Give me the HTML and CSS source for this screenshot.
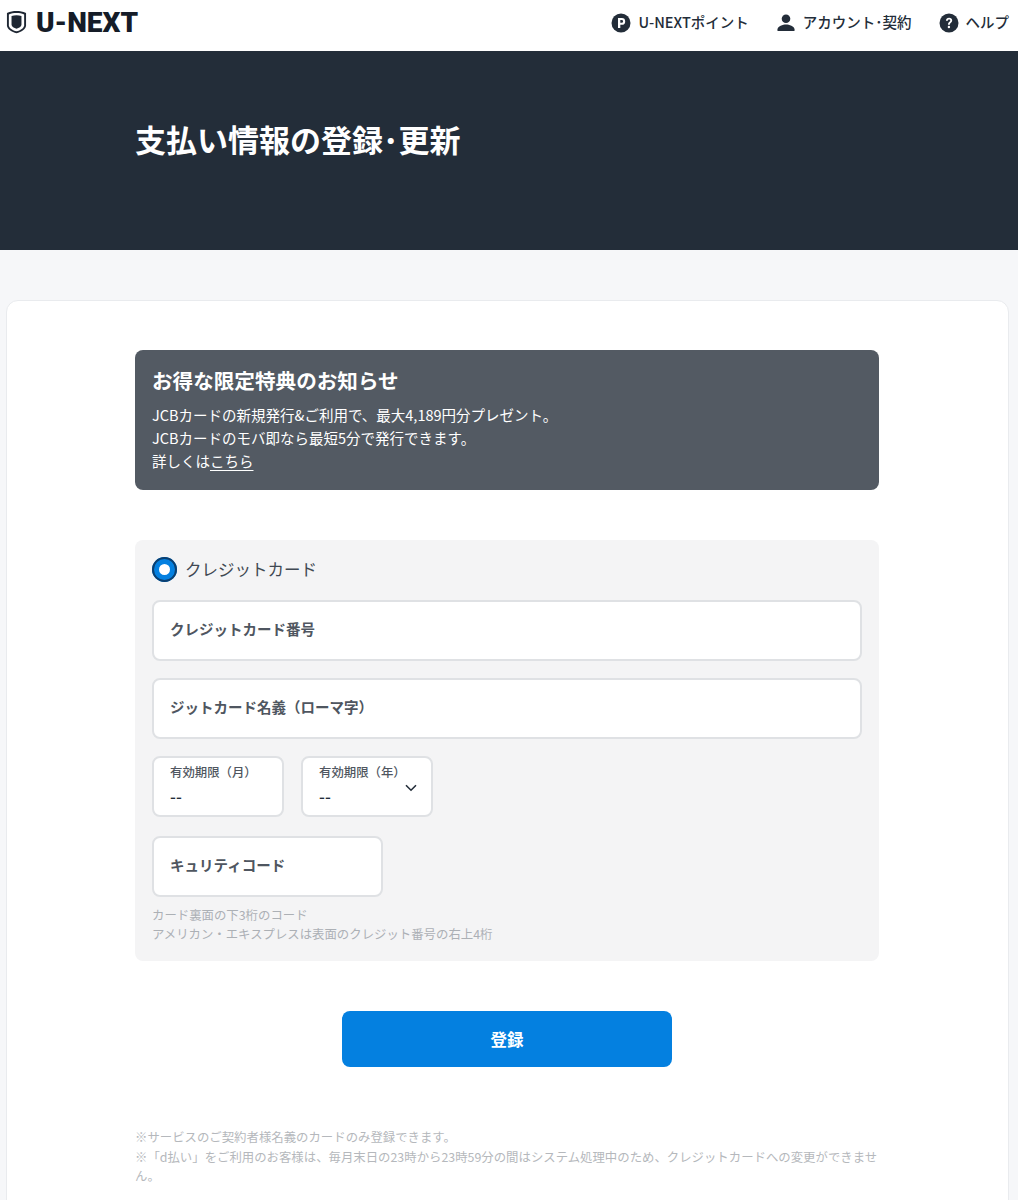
FILE: index.html
```html
<!DOCTYPE html>
<html lang="ja">
<head>
<meta charset="utf-8">
<title>支払い情報の登録・更新</title>
<link rel="stylesheet" href="styles.css">
</head>
<body>
<header class="topbar">
  <a class="logo">
    <svg class="logo-mark" viewBox="0 0 22 25" width="21" height="24"><path d="M1 3.200C4.500 1.500 7.500 1 11 1s6.500.5 10 2.200V16c0 4.500-5 7-10 8.300C6 23 1 20.500 1 16z" fill="#1f2733"/><path d="M3 4.600C5.500 3.500 8 3.100 11 3.100s5.500.4 8 1.500v11.200c0 3.200-4 5.300-8 6.400-4-1.100-8-3.200-8-6.400z" fill="#fff"/><path d="M5.800 6.200c1.700-.5 3.400-.7 5.200-.7s3.500.2 5.200.7v9.300c0 2-2.700 3.400-5.200 4.100-2.500-.7-5.200-2.100-5.200-4.100z" fill="#1f2733"/></svg>
    <span class="logo-text">U-NEXT</span>
  </a>
  <nav class="topnav">
    <a class="navitem">
      <svg viewBox="0 0 20 20" width="20" height="20"><circle cx="10" cy="10" r="9.500" fill="#232d39"/><path d="M7 5h3.800a3.400 3.400 0 0 1 0 6.800H9.300V15H7zM9.300 7v2.800h1.400a1.400 1.400 0 0 0 0-2.800z" fill="#fff" fill-rule="evenodd"/></svg>
      <span>U-NEXTポイント</span>
    </a>
    <a class="navitem">
      <svg viewBox="0 0 20 20" width="20" height="20"><circle cx="10" cy="5.700" r="4.300" fill="#232d39"/><path d="M1.500 18v-1.800c0-3 5.500-4.700 8.500-4.700s8.500 1.700 8.500 4.700V18z" fill="#232d39"/></svg>
      <span>アカウント･契約</span>
    </a>
    <a class="navitem">
      <svg viewBox="0 0 20 20" width="20" height="20"><circle cx="10" cy="10" r="9.500" fill="#232d39"/><path d="M6.900 7.700C7 5.900 8.300 4.800 10.100 4.800c1.800 0 3.100 1.100 3.100 2.700 0 2.300-2.400 2.300-2.400 4.300H9c0-2.900 2.300-2.900 2.300-4.300 0-.6-.5-1.100-1.200-1.100-.7 0-1.200.5-1.300 1.300z" fill="#fff"/><circle cx="9.900" cy="14" r="1.200" fill="#fff"/></svg>
      <span>ヘルプ</span>
    </a>
  </nav>
</header>

<section class="hero">
  <h1>支払い情報の登録･更新</h1>
</section>

<main class="page">
  <div class="card">
    <div class="notice">
      <h2>お得な限定特典のお知らせ</h2>
      <p>JCBカードの新規発行&amp;ご利用で、最大4,189円分プレゼント。</p>
      <p>JCBカードのモバ即なら最短5分で発行できます。</p>
      <p>詳しくは<a class="notice-link">こちら</a></p>
    </div>

    <form class="panel">
      <div class="radio-row">
        <span class="radio"></span>
        <span class="radio-label">クレジットカード</span>
      </div>
      <div class="field"><span class="placeholder">クレジットカード番号</span></div>
      <div class="field"><span class="placeholder">ジットカード名義（ローマ字）</span></div>
      <div class="expiry">
        <div class="select">
          <span class="select-label">有効期限（月）</span>
          <span class="select-value">--</span>
        </div>
        <div class="select">
          <span class="select-label">有効期限（年）</span>
          <span class="select-value">--</span>
          <svg class="chevron" viewBox="0 0 12 8" width="12" height="8"><path d="M1 1.200l5 5 5-5" fill="none" stroke="#232d39" stroke-width="1.600"/></svg>
        </div>
      </div>
      <div class="field field-short"><span class="placeholder">キュリティコード</span></div>
      <p class="hint">カード裏面の下3桁のコード<br>アメリカン・エキスプレスは表面のクレジット番号の右上4桁</p>
    </form>

    <div class="actions"><button class="submit" type="button">登録</button></div>

    <div class="notes">
      <p>※サービスのご契約者様名義のカードのみ登録できます。</p>
      <p>※「d払い」をご利用のお客様は、毎月末日の23時から23時59分の間はシステム処理中のため、クレジットカードへの変更ができません。</p>
    </div>
  </div>
</main>
</body>
</html>
```
FILE: styles.css
```css
* { box-sizing: border-box; }
html, body { margin: 0; padding: 0; }
body {
  background: #f6f7f9;
  color: #232d39;
  font-family: "Noto Sans CJK JP", "Noto Sans", sans-serif;
  height: 1200px;
  overflow: hidden;
}
p, h1, h2 { margin: 0; }

.topbar {
  height: 51px;
  background: #fff;
  display: flex;
  align-items: center;
  justify-content: space-between;
  padding: 0 9px 9px 6px;
}
.logo { display: flex; align-items: center; gap: 9px; padding-top: 2px; }
.logo-mark { display: block; }
.logo-text {
  font-family: "Roboto", sans-serif;
  font-weight: 900;
  font-size: 28px;
  line-height: 28px;
  letter-spacing: 0;
  padding-top: 1px;
  color: #151c28;
}
.topnav { display: flex; gap: 27px; }
.navitem {
  display: flex;
  align-items: center;
  gap: 7px;
  font-size: 14.500px;
  font-weight: 500;
  color: #232d39;
}
.navitem svg { display: block; margin-top: 4px; }

.hero {
  height: 199px;
  background: #232d39;
  padding: 65px 0 0 135px;
}
.hero h1 {
  color: #fff;
  font-size: 31px;
  line-height: 46px;
  font-weight: 700;
}

.page { padding: 50px 9px 0 6px; }
.card {
  background: #fff;
  border: 1px solid #e9ebee;
  border-radius: 12px;
  padding: 49px 129px 0 128px;
  height: 920px;
}

.notice {
  background: #535a63;
  color: #fff;
  border-radius: 8px;
  height: 140px;
  padding: 15px 17px 0;
  font-size: 14.500px;
  line-height: 23px;
}
.notice h2 {
  font-size: 20.600px;
  line-height: 30px;
  font-weight: 700;
  margin-bottom: 8px;
}
.notice-link { text-decoration: underline; text-underline-offset: 3px; }

.panel {
  background: #f4f4f5;
  border-radius: 8px;
  margin-top: 50px;
  height: 421px;
  padding: 17px 17px 0;
}
.radio-row { display: flex; align-items: center; gap: 8px; height: 25px; margin-bottom: 18px; }
.radio {
  width: 25px;
  height: 25px;
  border-radius: 50%;
  background: #fff;
  border: 7px solid #0480e0;
  outline: 2px solid #0b3f70;
  outline-offset: -2px;
}
.radio-label { font-size: 16.500px; line-height: 24px; color: #404852; padding-bottom: 1px; }

.field {
  height: 61px;
  background: #fff;
  border: 2px solid #dfe1e4;
  border-radius: 8px;
  margin-bottom: 17px;
  padding: 0 0 5px 16px;
  display: flex;
  align-items: center;
}
.placeholder { font-size: 14.500px; font-weight: 700; color: #4f5660; }
.field-short { width: 231px; margin-bottom: 9px; }

.expiry { display: flex; gap: 17px; margin-bottom: 19px; }
.select {
  position: relative;
  width: 132px;
  height: 61px;
  background: #fff;
  border: 2px solid #dfe1e4;
  border-radius: 8px;
  padding: 5px 0 0 16px;
  display: flex;
  flex-direction: column;
}
.select-label { font-size: 12.400px; line-height: 18px; font-weight: 500; color: #4f5660; }
.select-value { font-size: 16.500px; line-height: 24px; margin-top: 3px; font-weight: 500; color: #232d39; }
.chevron { position: absolute; right: 14px; top: 26px; }

.hint { font-size: 12.400px; line-height: 19px; color: #acb0b5; }

.actions { display: flex; justify-content: center; margin-top: 50px; }
.submit {
  width: 330px;
  height: 56px;
  border: 0;
  border-radius: 8px;
  background: #0480e0;
  color: #fff;
  font-family: inherit;
  font-size: 16.500px;
  font-weight: 700;
}
.notes { margin-top: 61px; font-size: 12.400px; line-height: 19.500px; color: #b5b8bc; }
```
